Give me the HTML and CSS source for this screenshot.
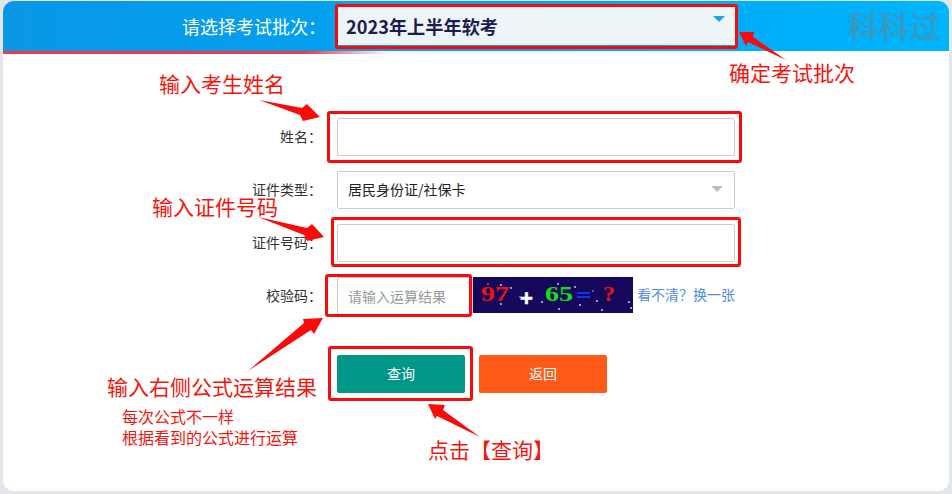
FILE: index.html
```html
<!DOCTYPE html>
<html lang="zh-CN">
<head>
<meta charset="utf-8">
<title>查询</title>
<link rel="stylesheet" href="styles.css">
</head>
<body>
<main class="card">
  <header class="topbar">
    <span class="topbar-label">请选择考试批次：</span>
    <div class="batch"><span>2023年上半年软考</span><i class="caret caret-blue"></i></div>
    <span class="watermark">科科过</span>
  </header>
  <div class="rule"></div>
  <form class="form">
    <div class="row"><label class="label">姓名：</label><input class="field" type="text"></div>
    <div class="row"><label class="label">证件类型：</label><div class="field picker"><span>居民身份证/社保卡</span><i class="caret caret-grey"></i></div></div>
    <div class="row"><label class="label">证件号码：</label><input class="field" type="text"></div>
    <div class="row">
      <label class="label">校验码：</label>
      <input class="field field-short" type="text" placeholder="请输入运算结果">
      <svg class="captcha" viewBox="0 0 160 36" aria-label="97 + 65 = ?">
        <rect width="160" height="36" fill="#15085c"/>
        <text class="cap-t" x="8" y="24" fill="#f01010" textLength="28" lengthAdjust="spacingAndGlyphs">97</text>
        <text class="cap-plus" x="47" y="29" fill="#ffffff">+</text>
        <text class="cap-t" x="72" y="24" fill="#10e010" textLength="28" lengthAdjust="spacingAndGlyphs">65</text>
        <rect x="104" y="15" width="13" height="2" fill="#1030f0"/>
        <rect x="104" y="19" width="13" height="2" fill="#1030f0"/>
        <text class="cap-t" x="130" y="24" fill="#f01010" textLength="12" lengthAdjust="spacingAndGlyphs">?</text>
        <g fill="#c8c8e0">
          <circle cx="28" cy="8" r="1"/><circle cx="38" cy="11" r="1"/><circle cx="28" cy="27" r="1"/>
          <circle cx="69" cy="25" r="1"/><circle cx="85" cy="7" r="1"/><circle cx="102" cy="10" r="1"/>
          <circle cx="86" cy="32" r="1"/><circle cx="107" cy="28" r="1"/><circle cx="124" cy="24" r="1"/>
          <circle cx="129" cy="33" r="1"/><circle cx="156" cy="25" r="1"/><circle cx="158" cy="31" r="1"/>
          <circle cx="15" cy="7" r="0.8"/><circle cx="47" cy="20" r="0.8"/><circle cx="120" cy="14" r="0.8"/>
        </g>
      </svg>
      <a class="refresh">看不清？换一张</a>
    </div>
    <div class="actions">
      <button class="btn btn-query" type="button">查询</button>
      <button class="btn btn-back" type="button">返回</button>
    </div>
  </form>
</main>

<div class="box box-batch"></div>
<div class="box box-name"></div>
<div class="box box-id"></div>
<div class="box box-code"></div>
<div class="box box-query"></div>

<svg class="arrows" viewBox="0 0 952 494" aria-hidden="true">
  <polygon points="259,100 302,108 307,104 320,117 303,121 300,115"/>
  <polygon points="739,32 754,32 753,37 786,60 748,42 746,46"/>
  <polygon points="258,217 307,228 312,224 324,237 307,241 304,235"/>
  <polygon points="248,371 304,323 303,319 323,318 314,334 311,330"/>
  <polygon points="428,404 445,405 443,410 480,437 437,416 435,419"/>
</svg>

<p class="note note-big note-name">输入考生姓名</p>
<p class="note note-big note-batch">确定考试批次</p>
<p class="note note-big note-id">输入证件号码</p>
<p class="note note-big note-code">输入右侧公式运算结果</p>
<p class="note note-small note-sub1">每次公式不一样</p>
<p class="note note-small note-sub2">根据看到的公式进行运算</p>
<p class="note note-click">点击【查询】</p>
</body>
</html>
```
FILE: styles.css
```css
* { box-sizing: border-box; }
html, body { margin: 0; padding: 0; }
body {
  position: relative;
  width: 952px;
  height: 494px;
  overflow: hidden;
  background: #e3e6ea;
  font-family: "Noto Sans CJK SC", "Liberation Sans", sans-serif;
  padding: 1px 3px 0;
}
.card {
  height: 490px;
  background: #fff;
  border-radius: 11px;
  overflow: hidden;
}
.topbar {
  position: relative;
  display: flex;
  align-items: center;
  height: 50px;
  background: linear-gradient(90deg, #0a97e6 0%, #00a4f2 50%, #00b5ff 100%);
}
.topbar-label {
  width: 334px;
  padding-left: 179px;
  color: #fff;
  font-size: 18px;
  white-space: nowrap;
}
.batch {
  display: flex;
  align-items: center;
  justify-content: space-between;
  width: 398px;
  height: 38px;
  padding: 0 8px 0 9px;
  background: #edf5f9;
  color: #1c1c50;
  font-size: 18.2px;
  font-weight: 700;
}
.caret {
  display: block;
  width: 0;
  height: 0;
  border-left: 6px solid transparent;
  border-right: 6px solid transparent;
  border-top: 6px solid #999;
}
.caret-blue { border-top-color: #1ea5e6; margin: -14px 2px 0 0; }
.caret-grey { border-top-color: #bdbdbd; margin-right: 1px; }
.watermark {
  position: absolute;
  left: 844px;
  top: 5px;
  color: #3f98bd;
  font-size: 31px;
  line-height: 38px;
  text-shadow: 0 0 1px #2c8ab0;
}
.rule {
  height: 3px;
  background: linear-gradient(90deg, #ea3a4c 0%, #ea3a4c 32%, rgba(234, 58, 76, 0) 41%);
}
.form {
  display: flex;
  flex-direction: column;
  gap: 15px;
  padding-top: 64px;
}
.row {
  display: flex;
  align-items: center;
  height: 38px;
}
.label {
  width: 319px;
  margin-right: 15px;
  padding-bottom: 2px;
  text-align: right;
  color: #333;
  font-size: 14px;
}
.field {
  display: block;
  width: 398px;
  height: 38px;
  padding: 0 10px;
  border: 1px solid #ccc;
  border-radius: 2px;
  background: #fff;
  color: #222;
  font-family: inherit;
  font-size: 14px;
  outline: none;
}
.picker {
  display: flex;
  align-items: center;
  justify-content: space-between;
  padding-bottom: 2px;
}
.field-short {
  width: 136px;
}
.field-short::placeholder { color: #999; opacity: 1; }
.captcha {
  display: block;
  width: 160px;
  height: 36px;
  align-self: flex-start;
}
.cap-t {
  font-family: "Liberation Serif", serif;
  font-size: 20px;
  font-weight: 700;
}
.cap-plus {
  font-family: "Liberation Sans", sans-serif;
  font-size: 22px;
  font-weight: 700;
  stroke: #fff;
  stroke-width: 0.6px;
}
.refresh {
  margin: -5px 0 0 4px;
  color: #4f8ae8;
  font-size: 14px;
  white-space: nowrap;
}
.actions {
  display: flex;
  gap: 14px;
  margin: 25px 0 0 334px;
}
.btn {
  width: 128px;
  height: 38px;
  padding: 0 0 2px;
  border: 0;
  border-radius: 2px;
  color: #fff;
  font-family: inherit;
  font-size: 14px;
}
.btn-query { background: #009688; }
.btn-back { background: #ff5a17; }

.box {
  position: absolute;
  border: 3px solid #fb0a0a;
  border-radius: 3px;
}
.box-batch { left: 335px; top: 4px; width: 403px; height: 45px; }
.box-name { left: 327px; top: 111px; width: 415px; height: 52px; }
.box-id { left: 331px; top: 217px; width: 410px; height: 50px; }
.box-code { left: 325px; top: 274px; width: 147px; height: 43px; }
.box-query { left: 328px; top: 346px; width: 145px; height: 55px; }

.arrows {
  position: absolute;
  left: 0;
  top: 0;
  width: 952px;
  height: 494px;
  fill: #fb0a0a;
}
.note {
  position: absolute;
  margin: 0;
  color: #f5140c;
  white-space: nowrap;
}
.note-big { font-size: 21px; line-height: 22px; }
.note-small { font-size: 16px; line-height: 18px; }
.note-name { left: 159px; top: 72px; }
.note-batch { left: 729px; top: 61px; }
.note-id { left: 152px; top: 195px; }
.note-code { left: 107px; top: 375px; }
.note-sub1 { left: 122px; top: 407px; }
.note-sub2 { left: 122px; top: 428px; }
.note-click { left: 428px; top: 438px; font-size: 21px; line-height: 22px; }
```
